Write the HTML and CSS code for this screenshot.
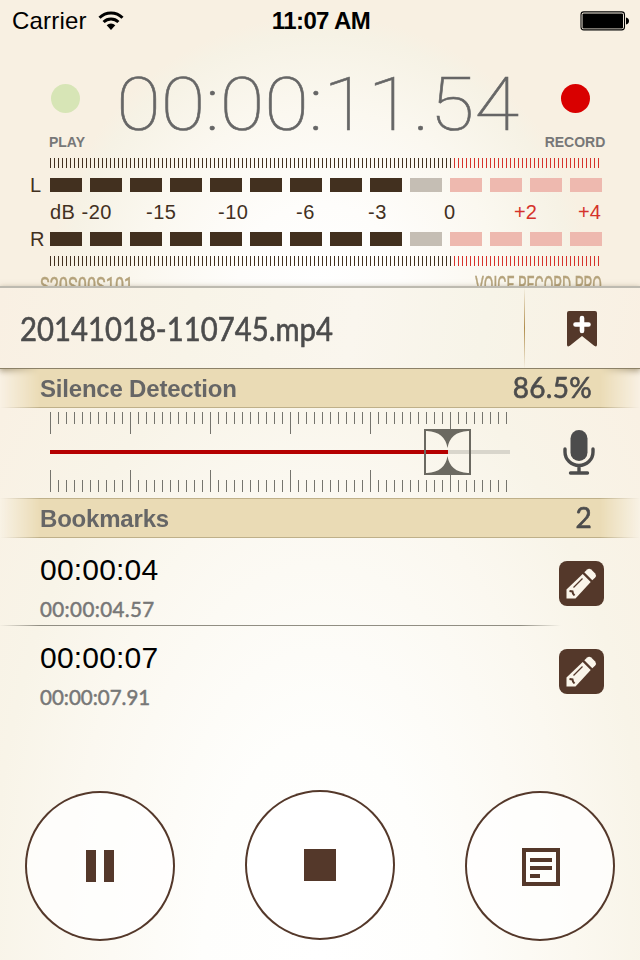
FILE: index.html
```
<!DOCTYPE html>
<html lang="en">
<head>
    <meta charset="UTF-8" />
    <meta name="viewport" content="width=device-width, initial-scale=1.0"/>
    <title>Voice Record Pro</title>
    <link rel="stylesheet" href="styles.css">
</head>
<body>

    <header class="meter-panel">
        <div class="status-bar">
            <div class="carrier">
                <span>Carrier</span>
                <svg width="26" height="20" viewBox="0 0 26 20">
                    <g fill="none" stroke="#000" stroke-width="3">
                        <path d="M1.5 6.8a16.3 16.3 0 0 1 23 0"/>
                        <path d="M5.6 11a10.5 10.5 0 0 1 14.8 0"/>
                    </g>
                    <path d="M8.7 14.3a6.2 6.2 0 0 1 8.6 0L13 19z"/>
                </svg>
            </div>
            <span class="clock">11:07 AM</span>
            <svg class="battery" width="50" height="20" viewBox="0 0 50 20">
                <rect x="1" y=".9" width="43.5" height="18" rx="2.8" fill="none" stroke="#000" stroke-width="1.1"/>
                <rect x="2.5" y="2.4" width="40.5" height="15" rx="1.2"/>
                <path d="M46 6.5q3 .8 3 3.5t-3 3.5z"/>
            </svg>
        </div>

        <div class="counter">
            <div class="lamp">
                <i class="dot play"></i>
                <span class="play-label">PLAY</span>
            </div>
            <div class="time">00:00:11.54</div>
            <div class="lamp">
                <i class="dot record"></i>
                <span class="record-label">RECORD</span>
            </div>
        </div>

        <div class="meter">
            <div class="ticks"></div>
            <div class="channel">
                <span>L</span>
                <i></i><i></i><i></i><i></i><i></i><i></i><i></i><i></i><i></i>
                <i class="off"></i><i class="over"></i><i class="over"></i><i class="over"></i><i class="over"></i>
            </div>
            <div class="scale">
                <span>dB -20</span><span>-15</span><span>-10</span><span>-6</span><span>-3</span><span>0</span><span class="hot">+2</span><span class="hot">+4</span>
            </div>
            <div class="channel">
                <span>R</span>
                <i></i><i></i><i></i><i></i><i></i><i></i><i></i><i></i><i></i>
                <i class="off"></i><i class="over"></i><i class="over"></i><i class="over"></i><i class="over"></i>
            </div>
            <div class="ticks"></div>
        </div>

        <div class="brand">
            <span class="serial">S20S00S101</span>
            <span class="model">VOICE RECORD PRO</span>
        </div>
    </header>

    <div class="file-bar">
        <div class="file-name"><span>20141018-110745.mp4</span></div>
        <button class="add-bookmark">
            <svg width="30" height="36" viewBox="0 0 30 36">
                <path d="M2 0h26q2 0 2 2v31.500q0 3.200-2.800 1.300L15 25 2.800 34.800Q0 36.700 0 33.500V2Q0 0 2 0z" fill="#54382a"/>
                <path d="M15 7v13M8.500 13.500h13" stroke="#fff" stroke-width="4.600" stroke-linecap="round"/>
            </svg>
        </button>
    </div>

    <div class="section-head first">
        <span>Silence Detection</span>
        <b>86.5%</b>
    </div>

    <div class="silence">
        <div class="slider">
            <div class="ruler"></div>
            <div class="track"><div class="level" style="width: 86.5%"></div></div>
            <div class="ruler bottom"></div>
            <svg class="thumb" width="47" height="46" viewBox="0 0 47 46">
                <rect x="1" y="1" width="45" height="44" fill="none" stroke="#6b6961" stroke-width="2"/>
                <path d="M3 2Q21 3 23.500 19Q26 3 44 2zM3 44Q21 43 23.500 27Q26 43 44 44z" fill="#6b6961"/>
            </svg>
        </div>
        <svg class="mic" width="32" height="46" viewBox="0 0 32 46">
            <rect x="7.500" y="0" width="17" height="31" rx="8.500" fill="#4c4c4c"/>
            <path d="M2 19v3a14 13.500 0 0 0 28 0v-3M16 36v6M7.500 43h17" fill="none" stroke="#4c4c4c" stroke-width="3.400" stroke-linecap="round"/>
        </svg>
    </div>

    <div class="section-head">
        <span>Bookmarks</span>
        <b>2</b>
    </div>

    <div class="bookmarks">
        <div class="bookmark">
            <div>
                <div class="title">00:00:04</div>
                <div class="stamp">00:00:04.57</div>
            </div>
            <button class="edit">
                <svg width="45" height="45" viewBox="0 0 45 45">
                    <rect width="45" height="45" rx="8" fill="#54382a"/>
                    <g fill="#faf5ea">
                        <path d="M7.500 37.500v-9L23.700 13l8 8L16.500 37.500z"/>
                        <path d="M25.300 11.300l2.900-2.900q2-1.500 4 0l4 4q1.500 2 0 4l-2.900 2.900z"/>
                    </g>
                    <path d="M14.500 26.500l9-9" stroke="#54382a" stroke-width="1.200"/>
                    <path d="M10.500 30l3 .5.500 2 1.500 2" fill="none" stroke="#54382a" stroke-width="2"/>
                </svg>
            </button>
        </div>
        <div class="bookmark">
            <div>
                <div class="title">00:00:07</div>
                <div class="stamp">00:00:07.91</div>
            </div>
            <button class="edit">
                <svg width="45" height="45" viewBox="0 0 45 45">
                    <rect width="45" height="45" rx="8" fill="#54382a"/>
                    <g fill="#faf5ea">
                        <path d="M7.500 37.500v-9L23.700 13l8 8L16.500 37.500z"/>
                        <path d="M25.300 11.300l2.900-2.900q2-1.500 4 0l4 4q1.500 2 0 4l-2.900 2.900z"/>
                    </g>
                    <path d="M14.500 26.500l9-9" stroke="#54382a" stroke-width="1.200"/>
                    <path d="M10.500 30l3 .5.500 2 1.500 2" fill="none" stroke="#54382a" stroke-width="2"/>
                </svg>
            </button>
        </div>
    </div>

    <footer class="controls">
        <button class="round">
            <svg width="150" height="150" viewBox="0 0 150 150"><path d="M61 59h10v32H61zM79 59h10v32H79z"/></svg>
        </button>
        <button class="round stop">
            <svg width="150" height="150" viewBox="0 0 150 150"><path d="M59 59h32v32H59z"/></svg>
        </button>
        <button class="round">
            <svg width="150" height="150" viewBox="0 0 150 150">
                <path d="M57 57h38v38H57zM61 61v30h30V61z" fill-rule="evenodd"/>
                <path d="M65 67h22v4H65zM65 75h22v4H65zM65 83h10v4H65z"/>
            </svg>
        </button>
    </footer>

</body>
</html>
```
FILE: styles.css
```
* {
    box-sizing: border-box;
}

body {
    margin: 0;
    width: 640px;
    height: 960px;
    overflow: hidden;
    display: flex;
    flex-direction: column;
    font-family: "Liberation Sans", Arial, sans-serif;
    background: radial-gradient(ellipse 390px 740px at 50% 100%, #fff 0%, #fefefc 30%, #fbf8f0 65%, #f8f4e8 85%, #f9f1e4 110%);
}

button {
    border: none;
    background: none;
    padding: 0;
}

svg {
    display: block;
}

/* Top panel with counter and VU meter */
.meter-panel {
    height: 286px;
    flex: none;
    overflow: hidden;
    background: radial-gradient(circle 270px at 50% 285px, #fff 0%, #fefdfb 30%, #fbf8f0 65%, #f6f2e5 93%, #f8f0e2 100%);
}

.status-bar {
    height: 40px;
    padding: 1px 10px 0 12px;
    display: grid;
    grid-template-columns: 1fr auto 1fr;
    align-items: center;
    font-size: 24px;
}

.carrier {
    display: flex;
    align-items: center;
    gap: 11px;
    letter-spacing: 0.2px;
}

.clock {
    font-weight: bold;
    letter-spacing: -0.6px;
}

.battery {
    justify-self: end;
}

.counter {
    height: 118px;
    padding: 0 25px 0 30px;
    display: flex;
    justify-content: space-between;
}

.lamp {
    width: 80px;
    padding-top: 44px;
    display: flex;
    flex-direction: column;
    align-items: center;
    font-size: 14px;
    font-weight: bold;
    color: #777;
}

.lamp:first-child {
    width: 71px;
}

.play-label {
    margin-left: 3px;
}

.dot {
    width: 29px;
    height: 29px;
    border-radius: 50%;
    margin-bottom: 21px;
}

.play {
    background: #d7e5b6;
}

.record {
    background: #d90000;
}

.time {
    font-family: Roboto, sans-serif;
    font-weight: 100;
    font-size: 75px;
    line-height: 88px;
    padding-top: 20px;
    color: #666;
    white-space: nowrap;
    transform: scaleX(1.085);
    -webkit-text-stroke: 0.6px #666;
}

.meter {
    padding-left: 50px;
    color: #42301f;
}

.ticks {
    width: 550px;
    height: 10px;
    background:
        linear-gradient(90deg, #42301f 402px, #d5322b 402px);
    -webkit-mask: repeating-linear-gradient(90deg, #000 0 1px, transparent 1px 4px);
    mask: repeating-linear-gradient(90deg, #000 0 1px, transparent 1px 4px);
}

.channel {
    display: flex;
    gap: 8px;
    height: 14px;
    margin: 10px 0 10px -20px;
    font-size: 20px;
    line-height: 15px;
}

.channel span {
    width: 12px;
}

.channel i {
    width: 32px;
    background: #42301f;
}

.channel i.off {
    background: #c5beb4;
}

.channel i.over {
    background: #eeb9af;
}

.scale {
    display: grid;
    grid-template-columns: 96px 72px 78px 72px 76px 70px 64px auto;
    height: 20px;
    font-size: 20px;
    line-height: 20px;
    letter-spacing: 0.5px;
    white-space: nowrap;
}

.hot {
    color: #d5322b;
    letter-spacing: 0;
}

.brand {
    display: flex;
    justify-content: space-between;
    padding: 5px 38px 0 40px;
    font-family: Roboto, sans-serif;
    font-size: 24px;
    line-height: 28px;
    color: #b5a37c;
    -webkit-text-stroke: 0.5px #b5a37c;
}

.serial {
    margin-top: 1px;
    transform: scaleX(0.68);
    transform-origin: left;
}

.model {
    transform: scaleX(0.585);
    transform-origin: right;
}

/* Current file */
.file-bar {
    position: relative;
    flex: none;
    height: 83px;
    display: flex;
    border-top: 2px solid #bdbab0;
    border-bottom: 1px solid #8c8167;
    box-shadow: 0 2px 6px rgba(80, 60, 20, 0.5);
    background: linear-gradient(100deg, #f9f0e3, #f8f4e8 30%, #faf6ee 55%, #f7f4e8 75%, #f9f0e3);
}

.file-name {
    flex: 1;
    padding-left: 20px;
    font-family: Lato, sans-serif;
    font-size: 32px;
    line-height: 82px;
    color: #4c4c4c;
    -webkit-text-stroke: 0.6px #4c4c4c;
}

.file-name span {
    display: inline-block;
    transform: scaleX(0.915);
    transform-origin: left;
}

.add-bookmark {
    width: 116px;
    padding: 2px 2px 0 0;
    display: flex;
    align-items: center;
    justify-content: center;
    border-left: 1px solid;
    border-image: linear-gradient(transparent, #b08d4c 50%, transparent) 1;
}

/* Section headings */
.section-head {
    flex: none;
    height: 40px;
    padding: 0 48px 0 40px;
    display: flex;
    justify-content: space-between;
    border: solid #bfb089;
    border-width: 1px 0;
    font-size: 24px;
    line-height: 40px;
    font-weight: bold;
    letter-spacing: -0.2px;
    color: #666;
    background: #eadbb5;
    -webkit-mask: linear-gradient(90deg, transparent, #000 40px, #000 600px, transparent);
    mask: linear-gradient(90deg, transparent, #000 40px, #000 600px, transparent);
}

.section-head.first {
    height: 39px;
    border-top: none;
}

.section-head b {
    font-family: Lato, sans-serif;
    font-size: 28px;
    font-weight: 400;
    line-height: 37px;
    letter-spacing: 0.3px;
    color: #4c4c4c;
    -webkit-text-stroke: 0.6px #4c4c4c;
}

/* Silence threshold slider */
.silence {
    flex: none;
    height: 90px;
    padding: 4px 45px 0 50px;
    display: flex;
    justify-content: space-between;
}

.slider {
    position: relative;
    width: 460px;
}

.ruler {
    height: 22px;
    background:
        repeating-linear-gradient(90deg, #75746d 0 1px, transparent 1px 80px),
        repeating-linear-gradient(90deg, #75746d 0 1px, transparent 1px 8px) 0 0 / 100% 12px no-repeat;
}

.ruler.bottom {
    transform: scaleY(-1);
}

.track {
    height: 4px;
    margin: 16px 0;
    background: #d9d6cc;
}

.level {
    height: 4px;
    background: #b50000;
}

.thumb {
    position: absolute;
    left: 374px;
    top: 17px;
}

.mic {
    margin-top: 18px;
}

/* Bookmark list */
.bookmarks {
    flex: none;
    height: 252px;
}

.bookmark {
    height: 88px;
    padding: 0 36px 0 40px;
    display: flex;
    justify-content: space-between;
    border-bottom: 1px solid;
    border-image: linear-gradient(90deg, transparent, #918e83 40px, #918e83 520px, transparent 560px) 1;
}

.bookmark:last-child {
    border-color: transparent;
    border-image: none;
}

.title {
    padding-top: 14px;
    font-size: 30px;
    line-height: 36px;
    letter-spacing: 0.2px;
    color: #000;
}

.stamp {
    padding-top: 8px;
    font-family: Lato, sans-serif;
    font-size: 20.5px;
    line-height: 26px;
    letter-spacing: 0.4px;
    color: #777;
    -webkit-text-stroke: 0.5px #777;
}

.bookmark:last-child .stamp {
    letter-spacing: 0;
}

.edit {
    align-self: flex-start;
    margin-top: 23px;
}

/* Transport buttons */
.controls {
    flex: none;
    padding: 1px 25px 0;
    display: flex;
    justify-content: space-between;
}

.round {
    width: 150px;
    height: 150px;
    border-radius: 50%;
    background: rgba(255, 255, 255, 0.75);
    box-shadow: inset 0 0 0 2px #54382a;
}

.round svg {
    fill: #54382a;
}

.stop {
    margin-top: -1px;
}
```
